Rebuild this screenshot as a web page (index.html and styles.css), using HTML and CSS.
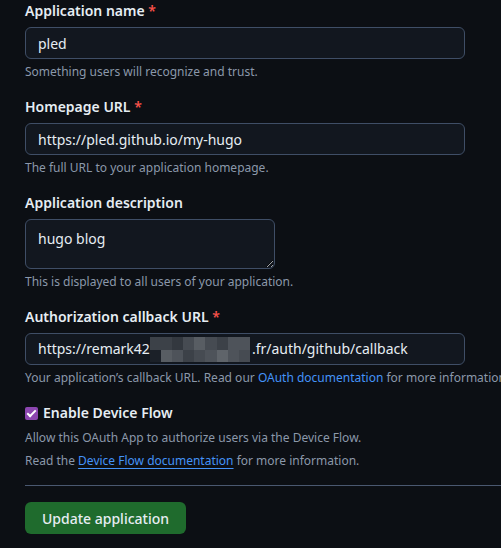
FILE: index.html
```html
<!DOCTYPE html>
<html lang="en">
<head>
    <meta charset="UTF-8">
    <meta name="viewport" content="width=device-width, initial-scale=1.0">
    <title>Edit OAuth application</title>
    <link rel="stylesheet" href="styles.css">
</head>
<body>
<form class="app-form">
    <div class="form-group">
        <label for="appName">Application name <span class="req">*</span></label>
        <input type="text" id="appName" class="field" value="pled">
        <p class="note">Something users will recognize and trust.</p>
    </div>

    <div class="form-group">
        <label for="homepage">Homepage URL <span class="req">*</span></label>
        <input type="text" id="homepage" class="field" value="https://pled.github.io/my-hugo">
        <p class="note">The full URL to your application homepage.</p>
    </div>

    <div class="form-group">
        <label for="description">Application description</label>
        <textarea id="description" class="field textarea">hugo blog</textarea>
        <p class="note">This is displayed to all users of your application.</p>
    </div>

    <div class="form-group">
        <label>Authorization callback URL <span class="req">*</span></label>
        <div class="field field-static">
            <span>https://remark42</span><span class="pixelated">
                <i class="s2"></i><i class="s2"></i><i class="s1"></i><i class="s3"></i><i class="s5"></i><i class="s3"></i><i class="s2"></i><i class="s4"></i><i class="s4"></i>
                <i class="s0"></i><i class="s5"></i><i class="s4"></i><i class="s2"></i><i class="s3"></i><i class="s4"></i><i class="s6"></i><i class="s4"></i><i class="s3"></i>
            </span><span>.fr/auth/github/callback</span>
        </div>
        <!-- long help line, runs past the narrow column like the live page -->
        <p class="note nowrap">Your application’s callback URL. Read our <a href="#" class="link">OAuth documentation</a> for more information.</p>
    </div>

    <div class="form-group device-flow">
        <label class="check-label"><input type="checkbox" class="check" checked> Enable Device Flow</label>
        <p class="note">Allow this OAuth App to authorize users via the Device Flow.</p>
        <p class="note second">Read the <a href="#" class="link underline">Device Flow documentation</a> for more information.</p>
    </div>

    <hr class="divider">

    <button type="submit" class="btn-primary">Update application</button>
</form>
</body>
</html>
```

FILE: styles.css
```css
html, body {
    margin: 0;
    padding: 0;
    background-color: #0c0f14;
    overflow: hidden;
    color-scheme: dark;
}
body {
    font-family: "Noto Sans", "Liberation Sans", sans-serif;
    color: #e6edf3;
    font-size: 14px;
}
.app-form {
    width: 620px;
    padding: 1px 0 0 25px;
}
.form-group {
    margin-bottom: 16px;
}
.form-group label {
    display: block;
    font-weight: 600;
    line-height: 20px;
    margin-bottom: 6px;
}
.req {
    color: #f85149;
}
.field {
    display: block;
    box-sizing: border-box;
    width: 440px;
    height: 32px;
    padding: 0 12px;
    margin: 0;
    font-family: inherit;
    font-size: 14px;
    line-height: 20px;
    color: #e6edf3;
    background-color: #12171f;
    border: 1px solid #3f4e66;
    border-radius: 6px;
    outline: none;
}
.textarea {
    width: 250px;
    height: 50px;
    padding: 8px 12px;
    line-height: 22px;
    resize: vertical;
}
.field-static {
    display: flex;
    align-items: center;
    white-space: nowrap;
}
/* blurred-out part of the callback host */
.pixelated {
    display: grid;
    grid-template-columns: repeat(9, 1fr);
    grid-template-rows: 13px 12px;
    width: 100px;
    height: 25px;
    margin: 1px 2px 0 0;
}
.pixelated i { display: block; }
.s0 { background: #1b2028; }
.s1 { background: #33383f; }
.s2 { background: #3c4148; }
.s3 { background: #464b52; }
.s4 { background: #4e535a; }
.s5 { background: #585d63; }
.s6 { background: #5f646a; }
.note {
    margin: 4px 0 0;
    font-size: 12px;
    line-height: 18px;
    color: #8b98aa;
}
.nowrap {
    white-space: nowrap;
}
.link {
    color: #4493f8;
    text-decoration: none;
}
.link.underline {
    text-decoration: underline;
    text-underline-offset: 3px;
}
.device-flow {
    margin-bottom: 0;
}
.device-flow .note {
    margin-top: 6px;
}
.device-flow .note.second {
    margin-top: 5px;
}
.check-label {
    display: flex !important;
    align-items: center;
    gap: 5px;
    margin-bottom: 0 !important;
}
.check {
    appearance: none;
    margin: 0;
    width: 13px;
    height: 13px;
    border-radius: 2px;
    background-color: #8c46b0;
    position: relative;
}
.check:checked::after {
    content: "";
    position: absolute;
    left: 4px;
    top: 1px;
    width: 3px;
    height: 7px;
    border: solid #fff;
    border-width: 0 2px 2px 0;
    transform: rotate(45deg);
}
.divider {
    border: none;
    height: 1px;
    background-color: #4a5870;
    margin: 15px 0 16px;
}
.btn-primary {
    height: 32px;
    padding: 0 17px;
    font-family: inherit;
    font-size: 14px;
    font-weight: 500;
    color: #e6edf3;
    background-color: #1f6b2d;
    border: none;
    border-radius: 6px;
    cursor: pointer;
}
```
